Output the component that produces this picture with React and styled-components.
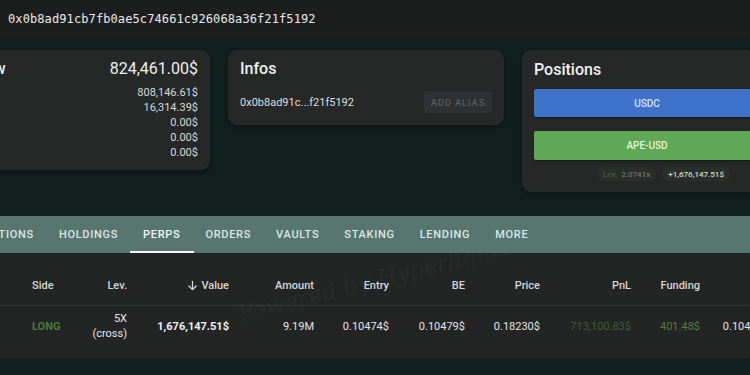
import React from "react";
import styled, { createGlobalStyle } from "styled-components";

const Global = createGlobalStyle`
  html, body { margin: 0; padding: 0; }
  body {
    background: #0f201d;
    font-family: Roboto, "Liberation Sans", sans-serif;
    color: #e4e6e6;
    overflow: hidden;
    width: 750px;
    height: 375px;
  }
`;

const Page = styled.div`
  width: 750px;
  height: 375px;
  overflow: hidden;
  position: relative;
`;

const TopBar = styled.div`
  height: 38px;
  background: #1c1e1e;
  display: flex;
  align-items: center;
  padding-left: 8px;
`;

const HexAddress = styled.span`
  font-family: "DejaVu Sans Mono", "Liberation Mono", monospace;
  font-size: 12px;
  color: #e8eaea;
  letter-spacing: 0.1px;
`;

const CardsRow = styled.div`
  display: flex;
  align-items: flex-start;
  gap: 18px;
  margin: 12px 0 0 -72px;
`;

const Card = styled.div`
  flex: 0 0 ${(p) => p.$w}px;
  background: #262828;
  border-radius: 9px;
  box-shadow: 0 2px 6px rgba(0, 0, 0, 0.35);
  padding: ${(p) => p.$pad || "7px 12px 12px"};
  box-sizing: border-box;
`;

const CardHead = styled.div`
  display: flex;
  justify-content: space-between;
  align-items: center;
  height: 22px;
`;

const Title = styled.div`
  font-size: 16px;
  font-weight: 500;
  color: #eef0f0;
`;

const BigValue = styled.div`
  font-size: 16px;
  font-weight: 400;
  color: #eef0f0;
`;

const SubList = styled.div`
  margin-top: 6px;
  display: flex;
  flex-direction: column;
`;

const SubRow = styled.div`
  display: flex;
  justify-content: space-between;
  font-size: 11px;
  line-height: 15px;
  color: #d6d9d9;
`;

const InfoRow = styled.div`
  margin-top: 12px;
  display: flex;
  justify-content: space-between;
  align-items: center;
`;

const ShortAddr = styled.span`
  font-size: 11px;
  color: #dcdfdf;
`;

const AliasButton = styled.button`
  height: 22px;
  width: 68px;
  border: none;
  border-radius: 3px;
  background: #2e3131;
  color: #555a5a;
  font-family: Roboto, sans-serif;
  font-size: 9.5px;
  font-weight: 500;
  letter-spacing: 0.8px;
  padding: 0;
  text-transform: uppercase;
`;

const PosButton = styled.div`
  margin-top: ${(p) => p.$mt}px;
  height: ${(p) => p.$h}px;
  background: ${(p) => p.$bg};
  border-radius: 2px;
  display: flex;
  align-items: center;
  justify-content: center;
  font-size: 10px;
  font-weight: 500;
  color: ${(p) => p.$fg};
  box-shadow: 0 1px 2px rgba(0, 0, 0, 0.4);
`;

const ChipRow = styled.div`
  margin-top: 7px;
  display: flex;
  gap: 6px;
  padding-left: 63px;
`;

const Chip = styled.div`
  height: 14px;
  border-radius: 7px;
  background: #2a2f2c;
  padding: 0 6px;
  display: flex;
  align-items: center;
  gap: 4px;
  font-size: 8px;
  font-weight: 500;
  color: ${(p) => p.$fg || "#6c716f"};
`;

const Dim = styled.span`
  color: #4f5553;
`;

const TabBar = styled.div`
  margin-top: 24px;
  height: 37px;
  background: #587670;
  overflow: hidden;
`;

const TabList = styled.div`
  display: flex;
  align-items: stretch;
  height: 100%;
  margin-left: ${(p) => p.$offset}px;
`;

const Tab = styled.div`
  position: relative;
  display: flex;
  align-items: center;
  padding: 0 12.5px;
  font-size: 11px;
  font-weight: 500;
  letter-spacing: 0.7px;
  color: ${(p) => (p.$active ? "#f2f6f5" : "#dde6e4")};
  white-space: nowrap;
  &::after {
    content: "";
    display: ${(p) => (p.$active ? "block" : "none")};
    position: absolute;
    left: -1px;
    right: -1px;
    bottom: 0;
    height: 2px;
    background: #f4f6f6;
  }
`;

const TableWrap = styled.div`
  position: relative;
  background: #222524;
  padding: 12px 0 12px;
  overflow: hidden;
`;

const cols = "80px 47px 102px 85px 75px 76px 75px 91px 69px 69px";

const HeadRow = styled.div`
  display: grid;
  grid-template-columns: ${cols};
  height: 40px;
  align-items: center;
  border-bottom: 1px solid #333736;
`;

const DataRow = styled.div`
  display: grid;
  grid-template-columns: ${cols};
  height: 40px;
  align-items: center;
`;

const HeadCell = styled.div`
  font-size: 11px;
  font-weight: 500;
  color: #d4d7d6;
  padding-left: ${(p) => (p.$left ? "32px" : "0")};
  white-space: nowrap;
  display: flex;
  justify-content: ${(p) => (p.$left ? "flex-start" : "flex-end")};
  align-items: center;
  gap: 3px;
`;

const Cell = styled.div`
  font-size: 11px;
  font-weight: ${(p) => (p.$bold ? 700 : 400)};
  color: ${(p) => p.$color || "#e2e4e4"};
  text-align: ${(p) => (p.$left ? "left" : "right")};
  padding-left: ${(p) => (p.$left ? "32px" : "0")};
  white-space: nowrap;
  line-height: 15px;
`;

const Watermark = styled.div`
  position: absolute;
  left: 238px;
  top: 48px;
  transform: rotate(-14deg);
  transform-origin: left center;
  font-family: "DejaVu Serif", serif;
  font-style: italic;
  font-size: 23px;
  color: rgba(255, 255, 255, 0.05);
  pointer-events: none;
  white-space: nowrap;
`;

const ArrowDown = () => (
  <svg width="11" height="11" viewBox="0 0 12 12" fill="none" stroke="#d4d7d6" strokeWidth="1.4" strokeLinecap="round" strokeLinejoin="round">
    <path d="M6 1.5v9M2 6.5l4 4 4-4" />
  </svg>
);

const tabs = ["POSITIONS", "HOLDINGS", "PERPS", "ORDERS", "VAULTS", "STAKING", "LENDING", "MORE"];

export default function App() {
  return (
    <Page>
      <Global />
      <TopBar>
        <HexAddress>0x0b8ad91cb7fb0ae5c74661c926068a36f21f5192</HexAddress>
      </TopBar>

      <CardsRow>
        <Card $w={282} $pad="7px 12px 10px">
          <CardHead>
            <Title>Overview</Title>
            <BigValue>824,461.00$</BigValue>
          </CardHead>
          <SubList>
            <SubRow><span>Perps</span><span>808,146.61$</span></SubRow>
            <SubRow><span>Spot</span><span>16,314.39$</span></SubRow>
            <SubRow><span>Vaults</span><span>0.00$</span></SubRow>
            <SubRow><span>Staked</span><span>0.00$</span></SubRow>
            <SubRow><span>Earn</span><span>0.00$</span></SubRow>
          </SubList>
        </Card>

        <Card $w={276}>
          <CardHead>
            <Title>Infos</Title>
          </CardHead>
          <InfoRow>
            <ShortAddr>0x0b8ad91c...f21f5192</ShortAddr>
            <AliasButton>Add alias</AliasButton>
          </InfoRow>
        </Card>

        <Card $w={250} $pad="8px 12px 11px">
          <CardHead>
            <Title>Positions</Title>
          </CardHead>
          <PosButton $mt={9} $h={28} $bg="#3f73c9" $fg="#d4e2f7">USDC</PosButton>
          <PosButton $mt={14} $h={29} $bg="#5fa855" $fg="#e4f2df">APE-USD</PosButton>
          <ChipRow>
            <Chip><Dim>Lev.</Dim> 2.0741x</Chip>
            <Chip $fg="#c9dcc6">+1,676,147.51$</Chip>
          </ChipRow>
        </Card>
      </CardsRow>

      <TabBar>
        <TabList $offset={-41}>
          {tabs.map((t) => (
            <Tab key={t} $active={t === "PERPS"}>{t}</Tab>
          ))}
        </TabList>
      </TabBar>

      <TableWrap>
        <HeadRow>
          <HeadCell $left>Side</HeadCell>
          <HeadCell>Lev.</HeadCell>
          <HeadCell><ArrowDown />Value</HeadCell>
          <HeadCell>Amount</HeadCell>
          <HeadCell>Entry</HeadCell>
          <HeadCell>BE</HeadCell>
          <HeadCell>Price</HeadCell>
          <HeadCell>PnL</HeadCell>
          <HeadCell>Funding</HeadCell>
          <HeadCell>Liq.</HeadCell>
        </HeadRow>
        <DataRow>
          <Cell $left $bold $color="#4c7a3b">LONG</Cell>
          <Cell>5X<br />(cross)</Cell>
          <Cell $bold $color="#f0f2f2">1,676,147.51$</Cell>
          <Cell>9.19M</Cell>
          <Cell>0.10474$</Cell>
          <Cell>0.10479$</Cell>
          <Cell>0.18230$</Cell>
          <Cell $color="#3e5c39">713,100.83$</Cell>
          <Cell $color="#537c43">401.48$</Cell>
          <Cell>0.10474$</Cell>
        </DataRow>
        <Watermark>Powered by Hyperliquid</Watermark>
      </TableWrap>
    </Page>
  );
}
